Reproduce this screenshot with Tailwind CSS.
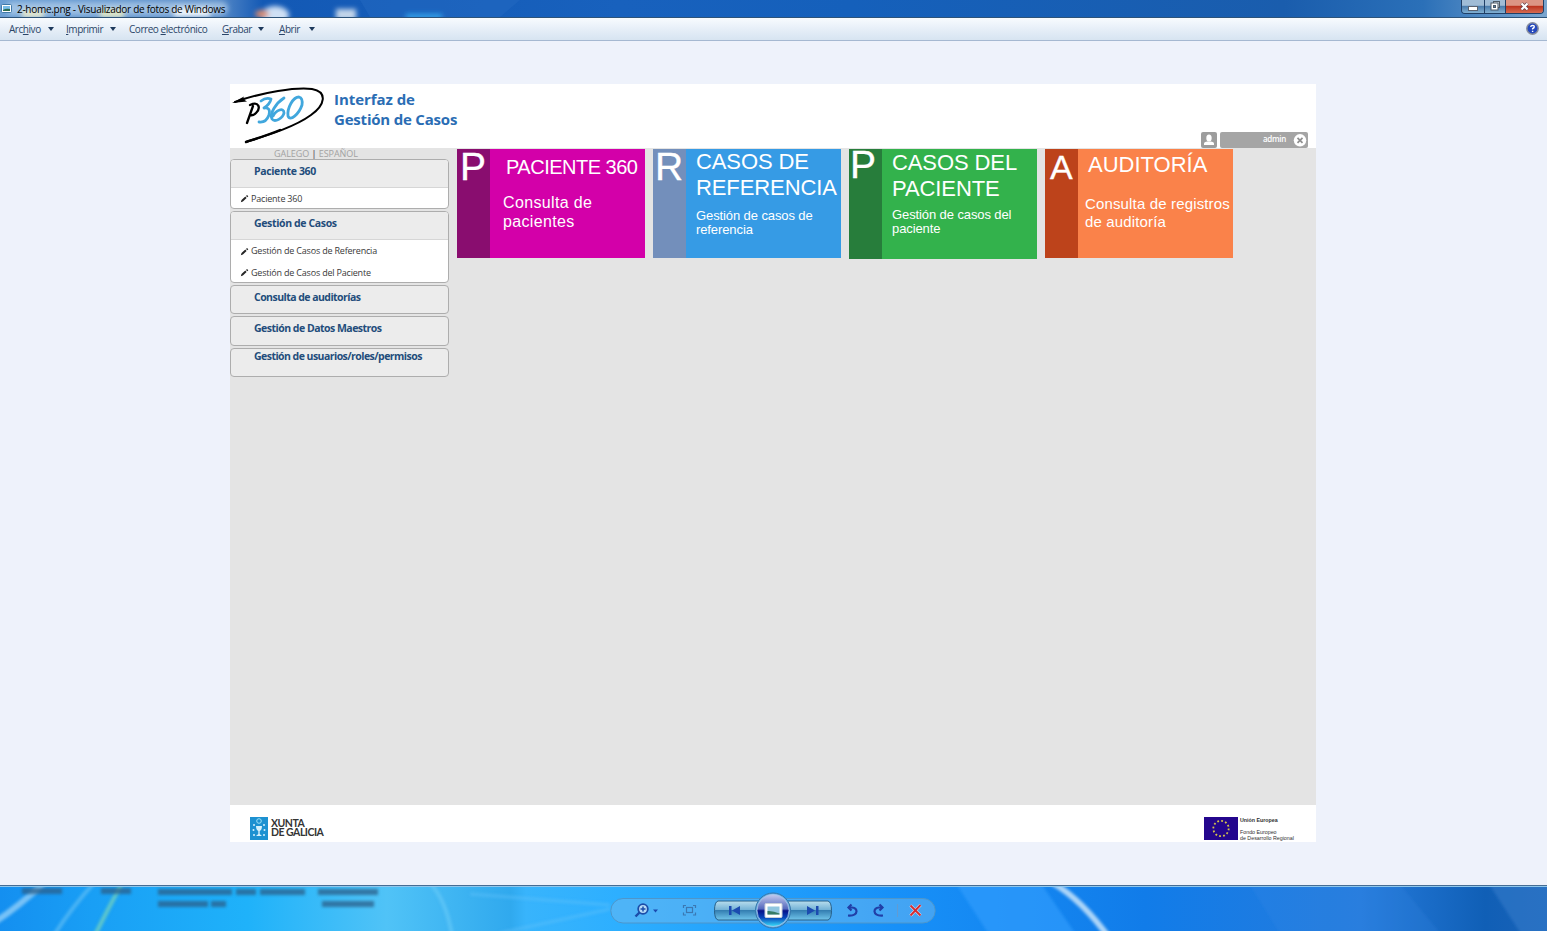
<!DOCTYPE html>
<html lang="es">

<head>
    <meta charset="UTF-8">
    <meta name="viewport" content="width=device-width, initial-scale=1.0">
    <title>2-home.png - Visualizador de fotos de Windows</title>
    <script src="https://cdn.jsdelivr.net/npm/@tailwindcss/browser@4"></script>
</head>

<body class="w-[1547px] h-[931px] overflow-hidden flex flex-col bg-[#eef2fb] font-['Open_Sans','Noto_Sans',sans-serif] whitespace-nowrap">

    <!-- Title bar -->
    <header class="relative h-[17px] shrink-0 flex justify-between bg-[#1760b8] overflow-hidden">
        <svg class="absolute inset-0" width="1547" height="17">
            <defs>
                <linearGradient id="aero">
                    <stop offset="0" stop-color="#6c9fd4" />
                    <stop offset=".14" stop-color="#5a8cc8" />
                    <stop offset=".17" stop-color="#1359b5" />
                    <stop offset=".4" stop-color="#1861bd" />
                    <stop offset=".55" stop-color="#1560bb" />
                    <stop offset=".83" stop-color="#1a5dad" />
                    <stop offset=".92" stop-color="#2b70b8" />
                    <stop offset="1" stop-color="#7ba6cf" />
                </linearGradient>
                <filter id="soft" x="-50%" y="-50%" width="200%" height="200%">
                    <feGaussianBlur stdDeviation="2.5" />
                </filter>
            </defs>
            <rect width="1547" height="17" fill="url(#aero)" />
            <path d="M360 0 H520 L500 17 H370Z" fill="#2469c2" opacity=".5" />
            <g filter="url(#soft)">
                <rect x="6" y="2" width="222" height="13" rx="6" fill="#b0cdea" opacity=".75" />
                <rect x="22" y="10" width="22" height="8" fill="#e4e8d0" />
                <rect x="100" y="9" width="24" height="9" fill="#dfe6c8" />
                <rect x="174" y="8" width="36" height="9" fill="#eef5fb" />
                <ellipse cx="275" cy="15" rx="14" ry="9" fill="#cfe0f4" />
                <ellipse cx="262" cy="14" rx="7" ry="4" fill="#d98b70" />
                <rect x="336" y="9" width="20" height="11" fill="#c4d6ea" />
                <rect x="406" y="14" width="36" height="5" fill="#35a5ec" />
            </g>
        </svg>
        <div class="relative flex items-center h-[17px] gap-[5px] pl-px">
            <svg width="11" height="11" viewBox="0 0 11 11">
                <rect x=".5" y="1.5" width="10" height="8" rx="1" fill="#fff" stroke="#3f79a8" />
                <rect x="2" y="3" width="7" height="5" fill="#79bde8" />
                <path d="M2 7 Q5 5 9 6 V8 H2Z" fill="#2d6c50" />
            </svg>
            <span class="text-[10px] leading-4 text-black tracking-[-0.29px]">2-home.png - Visualizador de fotos de Windows</span>
        </div>
        <div class="relative flex h-[14px] mr-[3px] border border-t-0 border-[#203f66] rounded-b overflow-hidden">
            <div class="w-[23px] border-r border-[#203f66] bg-linear-to-b from-[#a0bcd6] from-40% via-[#4c7dad] via-50% to-[#82b0d2] flex justify-center">
                <span class="w-[10px] h-[5px] mt-[6px] bg-white border border-[#5a6270]"></span>
            </div>
            <div class="w-[21px] border-r border-[#203f66] bg-linear-to-b from-[#a0bcd6] from-40% via-[#4c7dad] via-50% to-[#82b0d2] flex justify-center">
                <svg width="11" height="12" viewBox="0 0 11 12">
                    <rect x="3.5" y="1.5" width="6" height="6" fill="#ccd8e4" stroke="#4d5966" />
                    <rect x="1" y="3" width="7" height="7" fill="#fff" stroke="#4d5966" />
                    <rect x="3.5" y="5.5" width="2" height="2" fill="#4c7dad" stroke="#4d5966" />
                </svg>
            </div>
            <div class="w-[37px] bg-linear-to-b from-[#dc9584] from-40% via-[#bd3520] via-50% to-[#d66a50] flex justify-center">
                <svg width="11" height="12" viewBox="0 0 11 12">
                    <path d="M2.5 3.5 L8.5 9.5 M8.5 3.5 L2.5 9.5" stroke="#65424a" stroke-width="3.6" />
                    <path d="M2.5 3.5 L8.5 9.5 M8.5 3.5 L2.5 9.5" stroke="#fff" stroke-width="2.2" />
                </svg>
            </div>
        </div>
    </header>

    <!-- Menu bar -->
    <nav class="h-[24px] shrink-0 flex items-center justify-between border-t border-b border-t-[#2d5379] border-b-[#a5b8d1] bg-linear-to-b from-[#f8fbfe] via-[#e7eff8] via-48% to-[#d7e4f1] pl-[9px] pr-[8px]">
        <ul class="flex items-center text-[10px] leading-4 text-[#2b4568] tracking-[-0.45px]">
            <li class="w-[57px] flex items-center"><span class="w-[39px]">Arc<u>h</u>ivo</span><svg width="6" height="4"><path d="M0 0h6L3 4z" fill="#1e395b" /></svg></li>
            <li class="w-[63px] flex items-center"><span class="w-[44px]"><u>I</u>mprimir</span><svg width="6" height="4"><path d="M0 0h6L3 4z" fill="#1e395b" /></svg></li>
            <li class="w-[93px]">Correo <u>e</u>lectrónico</li>
            <li class="w-[57px] flex items-center"><span class="w-[36px]"><u>G</u>rabar</span><svg width="6" height="4"><path d="M0 0h6L3 4z" fill="#1e395b" /></svg></li>
            <li class="flex items-center"><span class="w-[30px]"><u>A</u>brir</span><svg width="6" height="4"><path d="M0 0h6L3 4z" fill="#1e395b" /></svg></li>
        </ul>
        <svg class="mb-px" width="13" height="13" viewBox="0 0 13 13">
            <circle cx="6.5" cy="6.5" r="5.7" fill="#2448bd" stroke="#898f9e" stroke-width="1.5" />
            <path d="M4.7 5 Q4.9 3.4 6.6 3.4 Q8.4 3.5 8.2 5 Q8 5.9 6.6 6.6 V7.6 M6.6 8.7 V10" fill="none" stroke="#fff" stroke-width="1.4" />
        </svg>
    </nav>

    <!-- Photo -->
    <main class="h-[844px] shrink-0 pt-[43px] pl-[230px]">
        <div class="w-[1086px] h-[758px] bg-white flex flex-col">

            <div class="h-[64px] shrink-0 flex justify-between">
                <div class="flex">
                    <svg width="104" height="64" viewBox="0 0 104 64" fill="none" stroke-linecap="round" stroke-linejoin="round">
                        <path d="M5 18 C33 8 66 3 82 5 C98 8 95 21 81 31 C66 42 42 50 16 58" stroke="#000" stroke-width="2" />
                        <path d="M50 46 C38 51 28 54 16 58" stroke="#000" stroke-width="2.4" />
                        <path d="M2 19 L14 12.5 L13 15 L17 17.5Z" fill="#000" />
                        <path d="M23 22 L17 39 M20 21 C29 17 31 24 26 29 Q23 32 20 31" stroke="#000" stroke-width="2.3" />
                        <g stroke="#41a7dd" stroke-width="2.8">
                            <path d="M31 17 Q36 13 41 15 Q40 20 34 24 Q41 23 39 31 Q36 39 29 38" />
                            <path d="M54 14 C46 19 39 30 42 35 C45 39 53 34 54 29 C54 23 46 26 43 32" />
                            <path d="M69 13 C63 13 57 24 58 32 C60 38 69 30 72 21 Q73 14 69 13Z" />
                        </g>
                    </svg>
                    <h1 class="pt-[5px] text-[15px] leading-5 font-bold text-[#2a6db4] tracking-[-0.2px]"><span class="tracking-[-0.05px]">Interfaz de</span><br>Gestión de Casos</h1>
                </div>
                <div class="flex items-end gap-[3px] pr-[8px]">
                    <div class="w-[16px] h-[16px] rounded-xs bg-[#9d9d9d] flex justify-center items-center">
                        <svg width="12" height="12" viewBox="0 0 12 12" fill="#fff">
                            <ellipse cx="6" cy="4" rx="2.7" ry="3.5" />
                            <path d="M1 11 V9.5 Q1 8 4.5 7.5 H7.5 Q11 8 11 9.5 V11Z" />
                        </svg>
                    </div>
                    <div class="w-[88px] h-[16px] rounded-xs bg-[#a5a5a5] flex justify-end items-center pr-[1px] gap-[7px]">
                        <span class="text-[8px] leading-3 font-semibold text-white pb-[2px] tracking-[-0.3px]">admin</span>
                        <svg width="14" height="14" viewBox="0 0 14 14">
                            <circle cx="7" cy="7.3" r="6.2" fill="#fff" />
                            <path d="M4.5 4.8 L9.5 9.8 M9.5 4.8 L4.5 9.8" stroke="#8f8f8f" stroke-width="1.7" />
                        </svg>
                    </div>
                </div>
            </div>

            <div class="h-[657px] shrink-0 bg-[#e4e4e4] flex">
                <!-- Sidebar -->
                <aside class="w-[219px] mr-[8px] shrink-0">
                    <p class="h-[11px] pl-[44px] text-[9px] leading-[11px] text-[#a2a2a2] tracking-[-0.05px]"><span>GALEGO</span> <b class="text-[#777]">|</b> <span>ESPAÑOL</span></p>
                    <div class="flex flex-col gap-[2px] text-[#234c7b] tracking-[-0.36px]">
                        <section class="h-[50px] border border-[#adadad] rounded-sm bg-white overflow-hidden">
                            <h2 class="h-[28px] bg-[#ececec] border-b border-[#d6d6d6] pl-[23px] pt-[3px] text-[10.5px] leading-4 font-bold">Paciente 360</h2>
                            <p class="h-[21px] pl-[9px] flex items-center gap-[2px] text-[9px] tracking-[-0.2px] text-[#393939]">
                                <svg width="9" height="9" viewBox="0 0 9 9"><path d="M.8 8.300 L1.500 6 L5.300 2.600 L6.600 3.900 L2.900 7.500Z M6 2 L7 1 L8.300 2.200 L7.300 3.200Z" fill="#252525" /></svg>
                                <span>Paciente 360</span>
                            </p>
                        </section>
                        <section class="h-[72px] border border-[#adadad] rounded-sm bg-white overflow-hidden">
                            <h2 class="h-[28px] bg-[#ececec] border-b border-[#d6d6d6] pl-[23px] pt-[3px] text-[10.5px] leading-4 font-bold">Gestión de Casos</h2>
                            <p class="h-[22px] pl-[9px] flex items-center gap-[2px] text-[9px] tracking-[-0.2px] text-[#393939]">
                                <svg width="9" height="9" viewBox="0 0 9 9"><path d="M.8 8.300 L1.500 6 L5.300 2.600 L6.600 3.900 L2.900 7.500Z M6 2 L7 1 L8.300 2.200 L7.300 3.200Z" fill="#252525" /></svg>
                                <span>Gestión de Casos de Referencia</span>
                            </p>
                            <p class="h-[21px] pl-[9px] flex items-center gap-[2px] text-[9px] tracking-[-0.2px] text-[#393939]">
                                <svg width="9" height="9" viewBox="0 0 9 9"><path d="M.8 8.300 L1.500 6 L5.300 2.600 L6.600 3.900 L2.900 7.500Z M6 2 L7 1 L8.300 2.200 L7.300 3.200Z" fill="#252525" /></svg>
                                <span>Gestión de Casos del Paciente</span>
                            </p>
                        </section>
                        <h2 class="h-[29px] border border-[#adadad] rounded-sm bg-[#ececec] pl-[23px] pt-[3px] text-[10.5px] leading-4 font-bold tracking-[-0.54px]">Consulta de auditorías</h2>
                        <h2 class="h-[30px] border border-[#adadad] rounded-sm bg-[#ececec] pl-[23px] pt-[3px] text-[10.5px] leading-4 font-bold tracking-[-0.51px]">Gestión de Datos Maestros</h2>
                        <h2 class="h-[29px] border border-[#adadad] rounded-sm bg-[#ececec] pl-[23px] text-[10.5px] leading-[15px] font-bold tracking-[-0.54px]">Gestión de usuarios/roles/permisos</h2>
                    </div>
                </aside>

                <!-- Tiles -->
                <div class="flex items-start gap-[8px] pt-px font-['Liberation_Sans',sans-serif] text-white">
                    <div class="w-[188px] h-[109px] flex bg-[#d300a9]">
                        <div class="w-[33px] bg-[#890d6f] pl-[3px] text-[39px] leading-[36px] [-webkit-text-stroke:0.3px_white]">P</div>
                        <div class="pl-[13px] pt-[8px]">
                            <h3 class="pl-[3px] text-[20px] leading-[21px] tracking-[-0.5px]">PACIENTE 360</h3>
                            <p class="pt-[15px] text-[16px] leading-[19px] tracking-[0.35px]">Consulta de<br>pacientes</p>
                        </div>
                    </div>
                    <div class="w-[188px] h-[109px] flex bg-[#369be5]">
                        <div class="w-[33px] bg-[#738fbb] pl-[2px] text-[39px] leading-[36px] [-webkit-text-stroke:0.3px_white]">R</div>
                        <div class="pl-[10px]">
                            <h3 class="text-[22px] leading-[26px] tracking-[-0.1px]">CASOS DE<br>REFERENCIA</h3>
                            <p class="pt-[8px] text-[13px] leading-[14px] tracking-[-0.1px]">Gestión de casos de<br>referencia</p>
                        </div>
                    </div>
                    <div class="w-[188px] h-[110px] flex bg-[#33b24c]">
                        <div class="w-[33px] bg-[#277d3b] pl-[1px] text-[39px] leading-[32px] [-webkit-text-stroke:0.3px_white]">P</div>
                        <div class="pl-[10px] pt-px">
                            <h3 class="text-[22px] leading-[26px] tracking-[-0.1px]">CASOS DEL<br>PACIENTE</h3>
                            <p class="pt-[6px] text-[13px] leading-[14px] tracking-[-0.1px]">Gestión de casos del<br>paciente</p>
                        </div>
                    </div>
                    <div class="w-[188px] h-[109px] flex bg-[#fa824a]">
                        <div class="w-[33px] bg-[#bd431b] pl-[5px] text-[34px] leading-[36px] [-webkit-text-stroke:0.3px_white]">A</div>
                        <div class="pl-[7px] pt-[3px]">
                            <h3 class="pl-[3px] text-[22px] leading-[26px]">AUDITORÍA</h3>
                            <p class="pt-[17px] text-[15px] leading-[18px] tracking-[0.15px]">Consulta de registros<br>de auditoría</p>
                        </div>
                    </div>
                </div>
            </div>

            <footer class="h-[37px] shrink-0 flex justify-between pl-[20px] pr-[22px] pt-[12px]">
                <div class="flex gap-[3px]">
                    <svg width="18" height="23" viewBox="0 0 18 23">
                        <rect width="18" height="23" fill="#1d91d1" />
                        <g fill="#d6f1fc">
                            <path d="M6 9 H12 Q12 13 9.7 14 V17 L12 19 H6 L8.3 17 V14 Q6 13 6 9Z" />
                            <circle cx="4" cy="8" r="1" /><circle cx="14" cy="8" r="1" />
                            <circle cx="3.5" cy="13" r="1" /><circle cx="14.5" cy="13" r="1" />
                            <circle cx="4" cy="18" r="1" /><circle cx="14" cy="18" r="1" />
                        </g>
                        <circle cx="9" cy="4" r="2.3" fill="none" stroke="#9de1f5" />
                    </svg>
                    <p class="pt-[2px] font-['Lato',sans-serif] text-[10.5px] leading-[9px] font-bold text-[#343434] tracking-[-0.5px]">XUNTA<br>DE GALICIA</p>
                </div>
                <div class="flex gap-[2px]">
                    <svg width="34" height="23" viewBox="0 0 34 23">
                        <rect width="34" height="23" fill="#24068d" />
                        <circle cx="17" cy="11.5" r="7.7" fill="none" stroke="#d5c54b" stroke-width="1.8" stroke-dasharray="1.8 2.23" />
                    </svg>
                    <p class="w-[54px] font-['Liberation_Sans',sans-serif] text-[5.3px] leading-[6px] text-[#303030]"><b>Unión Europea</b><br><br>Fondo Europeo<br>de Desarrollo Regional</p>
                </div>
            </footer>
        </div>
    </main>

    <!-- Playback controls over the desktop glass -->
    <footer class="relative h-[46px] shrink-0 overflow-hidden flex justify-center pt-[7px] pr-[2px]">
        <svg class="absolute inset-0" width="1547" height="46">
            <defs>
                <linearGradient id="sky">
                    <stop offset="0" stop-color="#148ff0" />
                    <stop offset=".06" stop-color="#199ff5" />
                    <stop offset=".16" stop-color="#1fb2fa" />
                    <stop offset=".25" stop-color="#50c3f7" />
                    <stop offset=".33" stop-color="#30a9ee" />
                    <stop offset=".34" stop-color="#38b4fc" />
                    <stop offset=".4" stop-color="#2dafff" />
                    <stop offset=".58" stop-color="#1790f8" />
                    <stop offset=".74" stop-color="#117ce9" />
                    <stop offset=".88" stop-color="#257bdc" />
                    <stop offset=".96" stop-color="#105fb6" />
                    <stop offset="1" stop-color="#1a62b8" />
                </linearGradient>
                <filter id="haze" x="-20%" y="-50%" width="140%" height="200%">
                    <feGaussianBlur stdDeviation="1.5" />
                </filter>
                <filter id="blur" filterUnits="userSpaceOnUse" x="0" y="-10" width="500" height="60">
                    <feGaussianBlur stdDeviation="1.8" />
                </filter>
            </defs>
            <rect width="1547" height="46" fill="url(#sky)" />
            <g filter="url(#haze)">
                <path d="M957 0 H1042 L1075 48 H988Z" fill="#2f9dfd" opacity=".65" />
                <path d="M1250 0 H1400 L1440 48 H1280Z" fill="#358ae4" opacity=".2" />
                <path d="M1487 -4 H1560 V52 H1523Z" fill="#3279ca" opacity=".6" />
            </g>
            <g filter="url(#haze)" fill="none">
                <path d="M-5 37 Q18 22 44 -2" stroke="#78c2f7" stroke-width="6" />
                <path d="M54 50 Q72 22 94 -2" stroke="#60bff5" stroke-width="4" opacity=".7" />
                <path d="M95 50 Q108 24 122 -2" stroke="#60c7c9" stroke-width="4" />
                <path d="M430 -2 Q446 15 452 50" stroke="#6accf8" stroke-width="4" opacity=".6" />
                <path d="M470 9 L610 20 M500 48 L610 24" stroke="#5cc1fc" stroke-width="3" opacity=".5" />
                <path d="M1053 -2 Q1082 15 1110 54" stroke="#add5f8" stroke-width="6" />
            </g>
            <!-- Blurred desktop labels behind the glass -->
            <g fill="none" stroke="#2b5f88" stroke-width="6" filter="url(#blur)" opacity=".75">
                <path d="M22 6 H62 M101 6 H131 M158 7 H232 M236 7 H256 M260 7 H305 M318 7 H378 M158 19 H208 M211 19 H226 M322 19 H374" />
            </g>
            <rect width="1547" height="1" fill="#466d94" />
            <rect y="1" width="1547" height="1" fill="#8fc7ec" />
        </svg>
        <svg class="relative" width="326" height="38" viewBox="0 0 326 38">
            <defs>
                <linearGradient id="glass" x2="0" y2="1">
                    <stop offset="0" stop-color="#b9deee" />
                    <stop offset=".47" stop-color="#72b1d5" />
                    <stop offset=".5" stop-color="#347fb2" />
                    <stop offset="1" stop-color="#71c5eb" />
                </linearGradient>
                <linearGradient id="orb" x2="0" y2="1">
                    <stop offset="0" stop-color="#c3caee" />
                    <stop offset=".45" stop-color="#5468bd" />
                    <stop offset=".51" stop-color="#07128a" />
                    <stop offset=".72" stop-color="#0745bb" />
                    <stop offset="1" stop-color="#38e1fb" />
                </linearGradient>
            </defs>
            <rect x=".8" y="6.5" width="324.4" height="24.5" rx="12.2" fill="#70baf0" fill-opacity=".5" stroke="#4d96cb" />
            <path d="M108 9 H154 V28 H108 Q104.5 27 104.5 18.5 Q104.5 10 108 9Z M172 9 H218 Q221.5 10 221.5 18.5 Q221.5 27 218 28 H172Z" fill="url(#glass)" stroke="#286088" />
            <circle cx="163" cy="18.5" r="17.5" fill="#68aee0" stroke="#3475ab" />
            <circle cx="163" cy="18.5" r="16" fill="url(#orb)" stroke="#a9c6ea" stroke-width=".8" />
            <rect x="155" y="11.5" width="17" height="14" rx="1" fill="#fff" stroke="#c9d0da" />
            <rect x="157.5" y="14.5" width="12" height="8" fill="#90c6df" />
            <path d="M157.5 19 Q163 18.500 169.5 21.5 V22.5 H157.5Z" fill="#377b65" />
            <g fill="#1b4bb0">
                <path d="M119 14 h2.5 v9 h-2.5z M130 14 v9 l-8-4.5z M206 14 h2.5 v9 h-2.5z M197 14 v9 l8-4.5z" />
                <path d="M43 17.5 h5 l-2.5 3z" />
            </g>
            <g fill="none" stroke="#1b4da9" stroke-width="1.8">
                <circle cx="33" cy="17" r="4.8" fill="#b5daf7" />
                <path d="M30.5 17 H35.5 M33 14.5 V19.5" stroke-width="1.5" />
                <path d="M29.5 20.5 L25.5 24.5" stroke-width="2.4" />
            </g>
            <g fill="none" stroke="#3b78b2" stroke-width="1.2">
                <rect x="76.5" y="15.5" width="6" height="5" />
                <path d="M73.5 16 V13.5 H76 M83 13.5 H85.5 V16 M85.5 20.5 V23 H83 M76 23 H73.5 V20.5" />
            </g>
            <g fill="none" stroke="#213fa7" stroke-width="2.2">
                <path d="M238.5 15.500 H242 Q246.500 16 246.500 19.500 Q246 24 238 23.500" />
                <path d="M241.500 12.500 L238.500 15.500 L241.500 18.500" />
                <path d="M272.500 15.500 H269 Q264.500 16 264.500 19.500 Q265 24 273 23.500" />
                <path d="M269.500 12.500 L272.500 15.500 L269.500 18.500" />
            </g>
            <path d="M287.5 12 V25" stroke="#629bd2" />
            <path d="M300.5 13.5 L310.5 23.5 M310.5 13 L300.5 23.5" stroke="#e2eaf5" stroke-width="3" />
            <path d="M300.5 13.5 L310.5 23.5 M310.5 13 L300.5 23.5" stroke="#d32c32" stroke-width="1.9" />
        </svg>
    </footer>
</body>

</html>
